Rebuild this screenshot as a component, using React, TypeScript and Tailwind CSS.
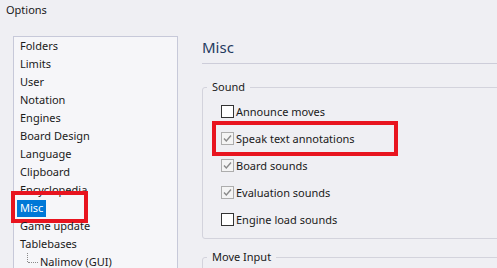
const pages = [
  'Folders',
  'Limits',
  'User',
  'Notation',
  'Engines',
  'Board Design',
  'Language',
  'Clipboard',
  'Encyclopedia',
  'Misc',
  'Game update',
  'Tablebases',
];

const soundOptions = [
  { label: 'Announce moves', checked: false },
  { label: 'Speak text annotations', checked: true, marked: true },
  { label: 'Board sounds', checked: true },
  { label: 'Evaluation sounds', checked: true },
  { label: 'Engine load sounds', checked: false },
];

function CheckBox({ checked }: { checked: boolean }) {
  if (!checked) {
    return <span className="block w-[13px] h-[13px] border border-[#333333] bg-white shrink-0" />;
  }
  return (
    <span className="block w-[13px] h-[13px] border border-[#adadad] bg-[#f4f4f4] shrink-0">
      <svg viewBox="0 0 11 11" className="w-[11px] h-[11px]">
        <path d="M2 5.5 L4.3 8 L9 2.5" fill="none" stroke="#8a8a8a" strokeWidth="1.4" />
      </svg>
    </span>
  );
}

export default function App() {
  return (
    <div className="w-[497px] h-[268px] overflow-hidden bg-[#efeff3] text-[11px] text-[#1a1a1a] font-['Noto_Sans',sans-serif]">
      <div className="h-[36px] pl-[6px] pt-[1px] leading-[18px]">Options</div>

      <div className="flex">
        <div className="shrink-0 ml-[13px] w-[165px] h-[240px] border border-[#c7c9d9] bg-[#f6f6f9]">
          {pages.map((page) => (
            <div key={page} className="relative h-[18px] leading-[18px] pl-[6px]">
              {page === 'Misc' ? (
                <>
                  <span className="inline-block -ml-[3px] px-[3px] h-[17px] mt-[1px] leading-[16px] bg-[#0078d7] text-white">
                    {page}
                  </span>
                  <span className="absolute left-[-3px] top-[-8px] w-[77px] h-[32px] border-[4px] border-[#e8141f]" />
                </>
              ) : (
                page
              )}
            </div>
          ))}
          <div className="flex items-center h-[18px] pl-[13px]">
            <span className="w-px h-[9px] -mt-[9px] border-l border-dotted border-[#8a8a8a]" />
            <span className="w-[10px] border-t border-dotted border-[#8a8a8a]" />
            <span className="ml-[2px] leading-[18px]">Nalimov (GUI)</span>
          </div>
        </div>

        <div className="flex-1 min-w-0 pl-[24px]">
          <div className="h-[22px] leading-[22px] text-[15px] text-[#1f3a5f]">Misc</div>
          <div className="mt-[5px] border-t border-[#cdcdd9]" />

          <fieldset className="mt-[15px] w-[320px] border border-[#d3d3dc] rounded-[3px]">
            <legend className="ml-[4px] px-[5px] leading-[16px]">Sound</legend>
            <div className="pt-[3px] pb-[5px] pl-[18px]">
              {soundOptions.map((opt) => (
                <div key={opt.label} className="relative flex items-center gap-[2px] h-[27px]">
                  <CheckBox checked={opt.checked} />
                  <span className="leading-[16px]">{opt.label}</span>
                  {opt.marked && (
                    <span className="absolute left-[-9px] top-[-4px] w-[186px] h-[35px] border-[4px] border-[#e8141f]" />
                  )}
                </div>
              ))}
            </div>
          </fieldset>

          <fieldset className="mt-[10px] w-[320px] h-[40px] border border-[#d3d3dc] rounded-[3px]">
            <legend className="ml-[4px] px-[5px] leading-[16px]">Move Input</legend>
          </fieldset>
        </div>
      </div>
    </div>
  );
}
